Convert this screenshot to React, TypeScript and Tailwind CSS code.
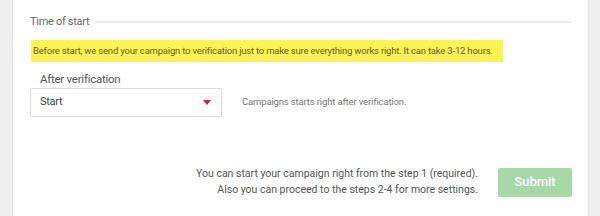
export default function App() {
  return (
    <div
      className="flex h-[216px] w-[600px] bg-[#efefef]"
      style={{ fontFamily: "Roboto, 'Liberation Sans', sans-serif" }}
    >
      <div className="w-[12px] shrink-0" />
      <div className="flex w-[577px] shrink-0 flex-col border-x border-[#e4e4e4] bg-white pl-[17px] pr-[16px]">
        <div className="mt-[14px] flex items-center gap-[5px]">
          <span className="text-[11px] leading-[16px] tracking-[-0.3px] text-[#666]">Time of start</span>
          <div className="h-[2px] flex-1 bg-[#ececec]" />
        </div>

        <div className="mt-[10px] ml-[1px] w-[472px] bg-[#fdf257] py-[4px] pl-[2px]">
          <p className="whitespace-nowrap text-[9.5px] leading-[14px] tracking-[-0.2px] text-[#666040]">
            Before start, we send your campaign to verification just to make sure everything works right. It can take 3-12 hours.
          </p>
        </div>

        <div className="mt-[9px] pl-[10px] text-[11.5px] leading-[16px] tracking-[-0.25px] text-[#555]">
          After verification
        </div>

        <div className="mt-[1px] flex items-center gap-[20px]">
          <div className="flex h-[29px] w-[192px] items-center justify-between rounded-[2px] border border-[#dcdcdc] pl-[9px] pr-[10px]">
            <span className="text-[11px] tracking-[-0.3px] text-[#444]">Start</span>
            <svg width="8" height="5" viewBox="0 0 8 5">
              <path d="M0 0h8L4 5z" fill="#c62828" />
            </svg>
          </div>
          <span className="text-[9.5px] tracking-[-0.15px] text-[#777]">Campaigns starts right after verification.</span>
        </div>

        <div className="mt-[49px] flex items-center justify-end gap-[20px]">
          <p className="text-right text-[10.5px] leading-[16px] text-[#555]">
            You can start your campaign right from the step 1 (required).
            <br />
            Also you can proceed to the steps 2-4 for more settings.
          </p>
          <button className="h-[29px] w-[74px] rounded-[2px] bg-[#a6d8a8] text-[13px] font-medium text-white">
            Submit
          </button>
        </div>
      </div>
    </div>
  );
}
